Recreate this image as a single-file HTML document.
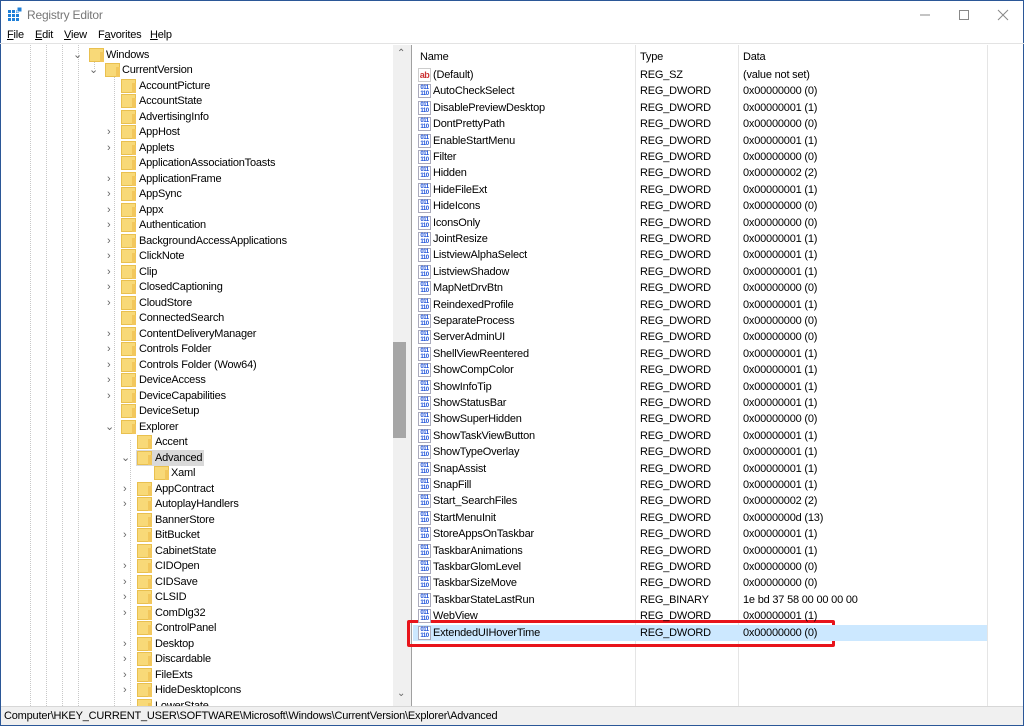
<!DOCTYPE html>
<html style="overflow:hidden"><head><meta charset="utf-8"><style>
*{margin:0;padding:0;box-sizing:border-box}
html,body{width:1024px;height:726px;overflow:hidden}
body{background:#fff;font-family:"Liberation Sans",sans-serif;font-size:11px;letter-spacing:-0.2px;color:#000;position:relative}
.win{position:absolute;left:0;top:0;width:1024px;height:726px;border:1px solid #2b5797}
.title{position:absolute;left:0;top:0;width:1024px;height:28px}
.title .t{position:absolute;left:27px;top:8px;color:#777;font-size:12px}
.menu{position:absolute;left:0;top:28px;width:1024px;height:16px;border-bottom:1px solid #e3e3e3}
.menu span{position:absolute;top:1px}
.tree{position:absolute;left:1px;top:45px;width:392px;height:661px;overflow:hidden;background:#fff}
.vl{position:absolute;top:0;height:661px;border-left:1px dotted #c8c8c8}
.row{position:absolute;height:16px;line-height:16px;white-space:nowrap}
.f{position:absolute;top:1px;width:15px;height:14px;background:#f8d978;border:1px solid #e9c04f}
.f:after{content:"";position:absolute;right:-1px;bottom:-1px;width:4px;height:10px;background:#f2c75c}
.ch{position:absolute;top:0;color:#666;font-size:11px}
.sb{position:absolute;left:393px;top:45px;width:16px;height:661px;background:#f0f0f0}
.thumb{position:absolute;left:0;top:297px;width:13px;height:96px;background:#a6a6a6}
.split{position:absolute;left:409px;top:45px;width:3px;height:661px;background:#f0f0f0;border-right:1px solid #a0a0a0}
.list{position:absolute;left:413px;top:45px;width:610px;height:661px;background:#fff}
.hdr{position:absolute;top:2px;height:20px;line-height:20px}
.cs{position:absolute;top:0;height:661px;border-left:1px solid #e5e5e5}
.lr{position:absolute;left:0;width:574px;height:16px;line-height:16px;white-space:nowrap}
.lr span{position:absolute}
.ic{position:absolute;left:5px;top:1px;width:13px;height:14px;border:1px solid #aab;background:#fff;font-size:6px;line-height:6px;color:#1a4fd8;font-weight:bold;text-align:center;letter-spacing:-0.5px}
.ab{color:#c33;font-size:9px;line-height:12px;font-weight:bold}
.status{position:absolute;left:1px;top:706px;width:1022px;height:19px;background:#f0f0f0;border-top:1px solid #d7d7d7;line-height:19px;padding-left:3px}
</style></head><body>
<div class="win"></div>
<div class="title">
<svg style="position:absolute;left:8px;top:7px" width="14" height="14"><rect x="0" y="3" width="11" height="11" fill="#1e7fd8"/><g stroke="#fff" stroke-width="1"><line x1="0" y1="6.5" x2="11" y2="6.5"/><line x1="0" y1="10.5" x2="11" y2="10.5"/><line x1="3.5" y1="3" x2="3.5" y2="14"/><line x1="7.5" y1="3" x2="7.5" y2="14"/></g><rect x="9" y="0" width="5" height="5" fill="#1e7fd8" stroke="#fff"/></svg>
<span class="t">Registry Editor</span>
<svg style="position:absolute;left:918px;top:8px" width="100" height="14"><line x1="2" y1="7" x2="12" y2="7" stroke="#888"/><rect x="41.5" y="2.5" width="9" height="9" fill="none" stroke="#888"/><path d="M80 2 L90 12 M90 2 L80 12" stroke="#888"/></svg>
</div>
<div class="menu"><span style="left:7px"><u>F</u>ile</span><span style="left:35px"><u>E</u>dit</span><span style="left:64px"><u>V</u>iew</span><span style="left:98px">F<u>a</u>vorites</span><span style="left:150px"><u>H</u>elp</span></div>

<div class="tree">
<div class="vl" style="left:29px"></div><div class="vl" style="left:45px"></div><div class="vl" style="left:61px"></div><div class="vl" style="left:77px"></div>
<div class="vl" style="left:113px;top:30px"></div>
<div class="vl" style="left:93px;top:14px;height:10px"></div>
<div class="vl" style="left:129px;top:395px"></div>
</div>
<div class="sb"><div style="position:absolute;left:4px;top:3px;color:#666;font-size:10px">&#8963;</div><div class="thumb"></div><div style="position:absolute;left:4px;top:643px;color:#666;font-size:10px">&#8964;</div></div>
<div class="split"></div>
<div class="list">
<div class="cs" style="left:222px"></div><div class="cs" style="left:325px"></div><div class="cs" style="left:574px"></div>
<div class="hdr" style="left:7px">Name</div><div class="hdr" style="left:227px">Type</div><div class="hdr" style="left:330px">Data</div>
</div>
<div style="position:absolute;left:407px;top:620px;width:428px;height:27px;border:3px solid #e8141b;border-radius:2px"></div>
<div class="status">Computer\HKEY_CURRENT_USER\SOFTWARE\Microsoft\Windows\CurrentVersion\Explorer\Advanced</div>

<div style="position:absolute;left:1px;top:46px;width:392px;height:660px;overflow:hidden">
<div class="row" style="top:1px;left:0;width:392px"><span class="ch" style="left:72px">&#8964;</span><span class="f" style="left:88px"></span><span style="position:absolute;left:105px">Windows</span></div>
<div class="row" style="top:16px;left:0;width:392px"><span class="ch" style="left:88px">&#8964;</span><span class="f" style="left:104px"></span><span style="position:absolute;left:121px">CurrentVersion</span></div>
<div class="row" style="top:32px;width:392px"><span class="f" style="left:120px"></span><span style="position:absolute;left:138px">AccountPicture</span></div>
<div class="row" style="top:47px;width:392px"><span class="f" style="left:120px"></span><span style="position:absolute;left:138px">AccountState</span></div>
<div class="row" style="top:63px;width:392px"><span class="f" style="left:120px"></span><span style="position:absolute;left:138px">AdvertisingInfo</span></div>
<div class="row" style="top:78px;width:392px"><span class="ch" style="left:106px">&#8250;</span><span class="f" style="left:120px"></span><span style="position:absolute;left:138px">AppHost</span></div>
<div class="row" style="top:94px;width:392px"><span class="ch" style="left:106px">&#8250;</span><span class="f" style="left:120px"></span><span style="position:absolute;left:138px">Applets</span></div>
<div class="row" style="top:109px;width:392px"><span class="f" style="left:120px"></span><span style="position:absolute;left:138px">ApplicationAssociationToasts</span></div>
<div class="row" style="top:125px;width:392px"><span class="ch" style="left:106px">&#8250;</span><span class="f" style="left:120px"></span><span style="position:absolute;left:138px">ApplicationFrame</span></div>
<div class="row" style="top:140px;width:392px"><span class="ch" style="left:106px">&#8250;</span><span class="f" style="left:120px"></span><span style="position:absolute;left:138px">AppSync</span></div>
<div class="row" style="top:156px;width:392px"><span class="ch" style="left:106px">&#8250;</span><span class="f" style="left:120px"></span><span style="position:absolute;left:138px">Appx</span></div>
<div class="row" style="top:171px;width:392px"><span class="ch" style="left:106px">&#8250;</span><span class="f" style="left:120px"></span><span style="position:absolute;left:138px">Authentication</span></div>
<div class="row" style="top:187px;width:392px"><span class="ch" style="left:106px">&#8250;</span><span class="f" style="left:120px"></span><span style="position:absolute;left:138px">BackgroundAccessApplications</span></div>
<div class="row" style="top:202px;width:392px"><span class="ch" style="left:106px">&#8250;</span><span class="f" style="left:120px"></span><span style="position:absolute;left:138px">ClickNote</span></div>
<div class="row" style="top:218px;width:392px"><span class="ch" style="left:106px">&#8250;</span><span class="f" style="left:120px"></span><span style="position:absolute;left:138px">Clip</span></div>
<div class="row" style="top:233px;width:392px"><span class="ch" style="left:106px">&#8250;</span><span class="f" style="left:120px"></span><span style="position:absolute;left:138px">ClosedCaptioning</span></div>
<div class="row" style="top:249px;width:392px"><span class="ch" style="left:106px">&#8250;</span><span class="f" style="left:120px"></span><span style="position:absolute;left:138px">CloudStore</span></div>
<div class="row" style="top:264px;width:392px"><span class="f" style="left:120px"></span><span style="position:absolute;left:138px">ConnectedSearch</span></div>
<div class="row" style="top:280px;width:392px"><span class="ch" style="left:106px">&#8250;</span><span class="f" style="left:120px"></span><span style="position:absolute;left:138px">ContentDeliveryManager</span></div>
<div class="row" style="top:295px;width:392px"><span class="ch" style="left:106px">&#8250;</span><span class="f" style="left:120px"></span><span style="position:absolute;left:138px">Controls Folder</span></div>
<div class="row" style="top:311px;width:392px"><span class="ch" style="left:106px">&#8250;</span><span class="f" style="left:120px"></span><span style="position:absolute;left:138px">Controls Folder (Wow64)</span></div>
<div class="row" style="top:326px;width:392px"><span class="ch" style="left:106px">&#8250;</span><span class="f" style="left:120px"></span><span style="position:absolute;left:138px">DeviceAccess</span></div>
<div class="row" style="top:342px;width:392px"><span class="ch" style="left:106px">&#8250;</span><span class="f" style="left:120px"></span><span style="position:absolute;left:138px">DeviceCapabilities</span></div>
<div class="row" style="top:357px;width:392px"><span class="f" style="left:120px"></span><span style="position:absolute;left:138px">DeviceSetup</span></div>
<div class="row" style="top:373px;width:392px"><span class="ch" style="left:104px">&#8964;</span><span class="f" style="left:120px"></span><span style="position:absolute;left:138px">Explorer</span></div>
<div class="row" style="top:388px;width:392px"><span class="f" style="left:136px"></span><span style="position:absolute;left:154px">Accent</span></div>
<div class="row" style="top:404px;width:392px"><span class="ch" style="left:120px">&#8964;</span><span style="position:absolute;left:135px;top:0;width:68px;height:16px;background:#d9d9d9"></span><span class="f" style="left:136px"></span><span style="position:absolute;left:154px">Advanced</span></div>
<div class="row" style="top:419px;width:392px"><span class="f" style="left:153px"></span><span style="position:absolute;left:170px">Xaml</span></div>
<div class="row" style="top:435px;width:392px"><span class="ch" style="left:122px">&#8250;</span><span class="f" style="left:136px"></span><span style="position:absolute;left:154px">AppContract</span></div>
<div class="row" style="top:450px;width:392px"><span class="ch" style="left:122px">&#8250;</span><span class="f" style="left:136px"></span><span style="position:absolute;left:154px">AutoplayHandlers</span></div>
<div class="row" style="top:466px;width:392px"><span class="f" style="left:136px"></span><span style="position:absolute;left:154px">BannerStore</span></div>
<div class="row" style="top:481px;width:392px"><span class="ch" style="left:122px">&#8250;</span><span class="f" style="left:136px"></span><span style="position:absolute;left:154px">BitBucket</span></div>
<div class="row" style="top:497px;width:392px"><span class="f" style="left:136px"></span><span style="position:absolute;left:154px">CabinetState</span></div>
<div class="row" style="top:512px;width:392px"><span class="ch" style="left:122px">&#8250;</span><span class="f" style="left:136px"></span><span style="position:absolute;left:154px">CIDOpen</span></div>
<div class="row" style="top:528px;width:392px"><span class="ch" style="left:122px">&#8250;</span><span class="f" style="left:136px"></span><span style="position:absolute;left:154px">CIDSave</span></div>
<div class="row" style="top:543px;width:392px"><span class="ch" style="left:122px">&#8250;</span><span class="f" style="left:136px"></span><span style="position:absolute;left:154px">CLSID</span></div>
<div class="row" style="top:559px;width:392px"><span class="ch" style="left:122px">&#8250;</span><span class="f" style="left:136px"></span><span style="position:absolute;left:154px">ComDlg32</span></div>
<div class="row" style="top:574px;width:392px"><span class="f" style="left:136px"></span><span style="position:absolute;left:154px">ControlPanel</span></div>
<div class="row" style="top:590px;width:392px"><span class="ch" style="left:122px">&#8250;</span><span class="f" style="left:136px"></span><span style="position:absolute;left:154px">Desktop</span></div>
<div class="row" style="top:605px;width:392px"><span class="ch" style="left:122px">&#8250;</span><span class="f" style="left:136px"></span><span style="position:absolute;left:154px">Discardable</span></div>
<div class="row" style="top:621px;width:392px"><span class="ch" style="left:122px">&#8250;</span><span class="f" style="left:136px"></span><span style="position:absolute;left:154px">FileExts</span></div>
<div class="row" style="top:636px;width:392px"><span class="ch" style="left:122px">&#8250;</span><span class="f" style="left:136px"></span><span style="position:absolute;left:154px">HideDesktopIcons</span></div>
<div class="row" style="top:652px;width:392px"><span class="f" style="left:136px"></span><span style="position:absolute;left:154px">LowerState</span></div>
</div>

<div style="position:absolute;left:413px;top:67px;width:574px;height:600px">
<div class="lr" style="top:0"><span class="ic ab" style="border-color:#ccc">ab</span><span style="left:20px">(Default)</span><span style="left:227px">REG_SZ</span><span style="left:330px">(value not set)</span></div>
<div class="lr" style="top:16.4px"><span class="ic">011<br>110</span><span style="left:20px">AutoCheckSelect</span><span style="left:227px">REG_DWORD</span><span style="left:330px">0x00000000 (0)</span></div>
<div class="lr" style="top:32.8px"><span class="ic">011<br>110</span><span style="left:20px">DisablePreviewDesktop</span><span style="left:227px">REG_DWORD</span><span style="left:330px">0x00000001 (1)</span></div>
<div class="lr" style="top:49.2px"><span class="ic">011<br>110</span><span style="left:20px">DontPrettyPath</span><span style="left:227px">REG_DWORD</span><span style="left:330px">0x00000000 (0)</span></div>
<div class="lr" style="top:65.6px"><span class="ic">011<br>110</span><span style="left:20px">EnableStartMenu</span><span style="left:227px">REG_DWORD</span><span style="left:330px">0x00000001 (1)</span></div>
<div class="lr" style="top:82px"><span class="ic">011<br>110</span><span style="left:20px">Filter</span><span style="left:227px">REG_DWORD</span><span style="left:330px">0x00000000 (0)</span></div>
<div class="lr" style="top:98.4px"><span class="ic">011<br>110</span><span style="left:20px">Hidden</span><span style="left:227px">REG_DWORD</span><span style="left:330px">0x00000002 (2)</span></div>
<div class="lr" style="top:114.8px"><span class="ic">011<br>110</span><span style="left:20px">HideFileExt</span><span style="left:227px">REG_DWORD</span><span style="left:330px">0x00000001 (1)</span></div>
<div class="lr" style="top:131.2px"><span class="ic">011<br>110</span><span style="left:20px">HideIcons</span><span style="left:227px">REG_DWORD</span><span style="left:330px">0x00000000 (0)</span></div>
<div class="lr" style="top:147.6px"><span class="ic">011<br>110</span><span style="left:20px">IconsOnly</span><span style="left:227px">REG_DWORD</span><span style="left:330px">0x00000000 (0)</span></div>
<div class="lr" style="top:164px"><span class="ic">011<br>110</span><span style="left:20px">JointResize</span><span style="left:227px">REG_DWORD</span><span style="left:330px">0x00000001 (1)</span></div>
<div class="lr" style="top:180.4px"><span class="ic">011<br>110</span><span style="left:20px">ListviewAlphaSelect</span><span style="left:227px">REG_DWORD</span><span style="left:330px">0x00000001 (1)</span></div>
<div class="lr" style="top:196.8px"><span class="ic">011<br>110</span><span style="left:20px">ListviewShadow</span><span style="left:227px">REG_DWORD</span><span style="left:330px">0x00000001 (1)</span></div>
<div class="lr" style="top:213.2px"><span class="ic">011<br>110</span><span style="left:20px">MapNetDrvBtn</span><span style="left:227px">REG_DWORD</span><span style="left:330px">0x00000000 (0)</span></div>
<div class="lr" style="top:229.6px"><span class="ic">011<br>110</span><span style="left:20px">ReindexedProfile</span><span style="left:227px">REG_DWORD</span><span style="left:330px">0x00000001 (1)</span></div>
<div class="lr" style="top:246px"><span class="ic">011<br>110</span><span style="left:20px">SeparateProcess</span><span style="left:227px">REG_DWORD</span><span style="left:330px">0x00000000 (0)</span></div>
<div class="lr" style="top:262.4px"><span class="ic">011<br>110</span><span style="left:20px">ServerAdminUI</span><span style="left:227px">REG_DWORD</span><span style="left:330px">0x00000000 (0)</span></div>
<div class="lr" style="top:278.8px"><span class="ic">011<br>110</span><span style="left:20px">ShellViewReentered</span><span style="left:227px">REG_DWORD</span><span style="left:330px">0x00000001 (1)</span></div>
<div class="lr" style="top:295.2px"><span class="ic">011<br>110</span><span style="left:20px">ShowCompColor</span><span style="left:227px">REG_DWORD</span><span style="left:330px">0x00000001 (1)</span></div>
<div class="lr" style="top:311.6px"><span class="ic">011<br>110</span><span style="left:20px">ShowInfoTip</span><span style="left:227px">REG_DWORD</span><span style="left:330px">0x00000001 (1)</span></div>
<div class="lr" style="top:328px"><span class="ic">011<br>110</span><span style="left:20px">ShowStatusBar</span><span style="left:227px">REG_DWORD</span><span style="left:330px">0x00000001 (1)</span></div>
<div class="lr" style="top:344.4px"><span class="ic">011<br>110</span><span style="left:20px">ShowSuperHidden</span><span style="left:227px">REG_DWORD</span><span style="left:330px">0x00000000 (0)</span></div>
<div class="lr" style="top:360.8px"><span class="ic">011<br>110</span><span style="left:20px">ShowTaskViewButton</span><span style="left:227px">REG_DWORD</span><span style="left:330px">0x00000001 (1)</span></div>
<div class="lr" style="top:377.2px"><span class="ic">011<br>110</span><span style="left:20px">ShowTypeOverlay</span><span style="left:227px">REG_DWORD</span><span style="left:330px">0x00000001 (1)</span></div>
<div class="lr" style="top:393.6px"><span class="ic">011<br>110</span><span style="left:20px">SnapAssist</span><span style="left:227px">REG_DWORD</span><span style="left:330px">0x00000001 (1)</span></div>
<div class="lr" style="top:410px"><span class="ic">011<br>110</span><span style="left:20px">SnapFill</span><span style="left:227px">REG_DWORD</span><span style="left:330px">0x00000001 (1)</span></div>
<div class="lr" style="top:426.4px"><span class="ic">011<br>110</span><span style="left:20px">Start_SearchFiles</span><span style="left:227px">REG_DWORD</span><span style="left:330px">0x00000002 (2)</span></div>
<div class="lr" style="top:442.8px"><span class="ic">011<br>110</span><span style="left:20px">StartMenuInit</span><span style="left:227px">REG_DWORD</span><span style="left:330px">0x0000000d (13)</span></div>
<div class="lr" style="top:459.2px"><span class="ic">011<br>110</span><span style="left:20px">StoreAppsOnTaskbar</span><span style="left:227px">REG_DWORD</span><span style="left:330px">0x00000001 (1)</span></div>
<div class="lr" style="top:475.6px"><span class="ic">011<br>110</span><span style="left:20px">TaskbarAnimations</span><span style="left:227px">REG_DWORD</span><span style="left:330px">0x00000001 (1)</span></div>
<div class="lr" style="top:492px"><span class="ic">011<br>110</span><span style="left:20px">TaskbarGlomLevel</span><span style="left:227px">REG_DWORD</span><span style="left:330px">0x00000000 (0)</span></div>
<div class="lr" style="top:508.4px"><span class="ic">011<br>110</span><span style="left:20px">TaskbarSizeMove</span><span style="left:227px">REG_DWORD</span><span style="left:330px">0x00000000 (0)</span></div>
<div class="lr" style="top:524.8px"><span class="ic">011<br>110</span><span style="left:20px">TaskbarStateLastRun</span><span style="left:227px">REG_BINARY</span><span style="left:330px">1e bd 37 58 00 00 00 00</span></div>
<div class="lr" style="top:541.2px"><span class="ic">011<br>110</span><span style="left:20px">WebView</span><span style="left:227px">REG_DWORD</span><span style="left:330px">0x00000001 (1)</span></div>
<div class="lr" style="top:557.6px;background:#cce8ff"><span class="ic">011<br>110</span><span style="left:20px">ExtendedUIHoverTime</span><span style="left:227px">REG_DWORD</span><span style="left:330px">0x00000000 (0)</span></div>
</div>
</body></html>
